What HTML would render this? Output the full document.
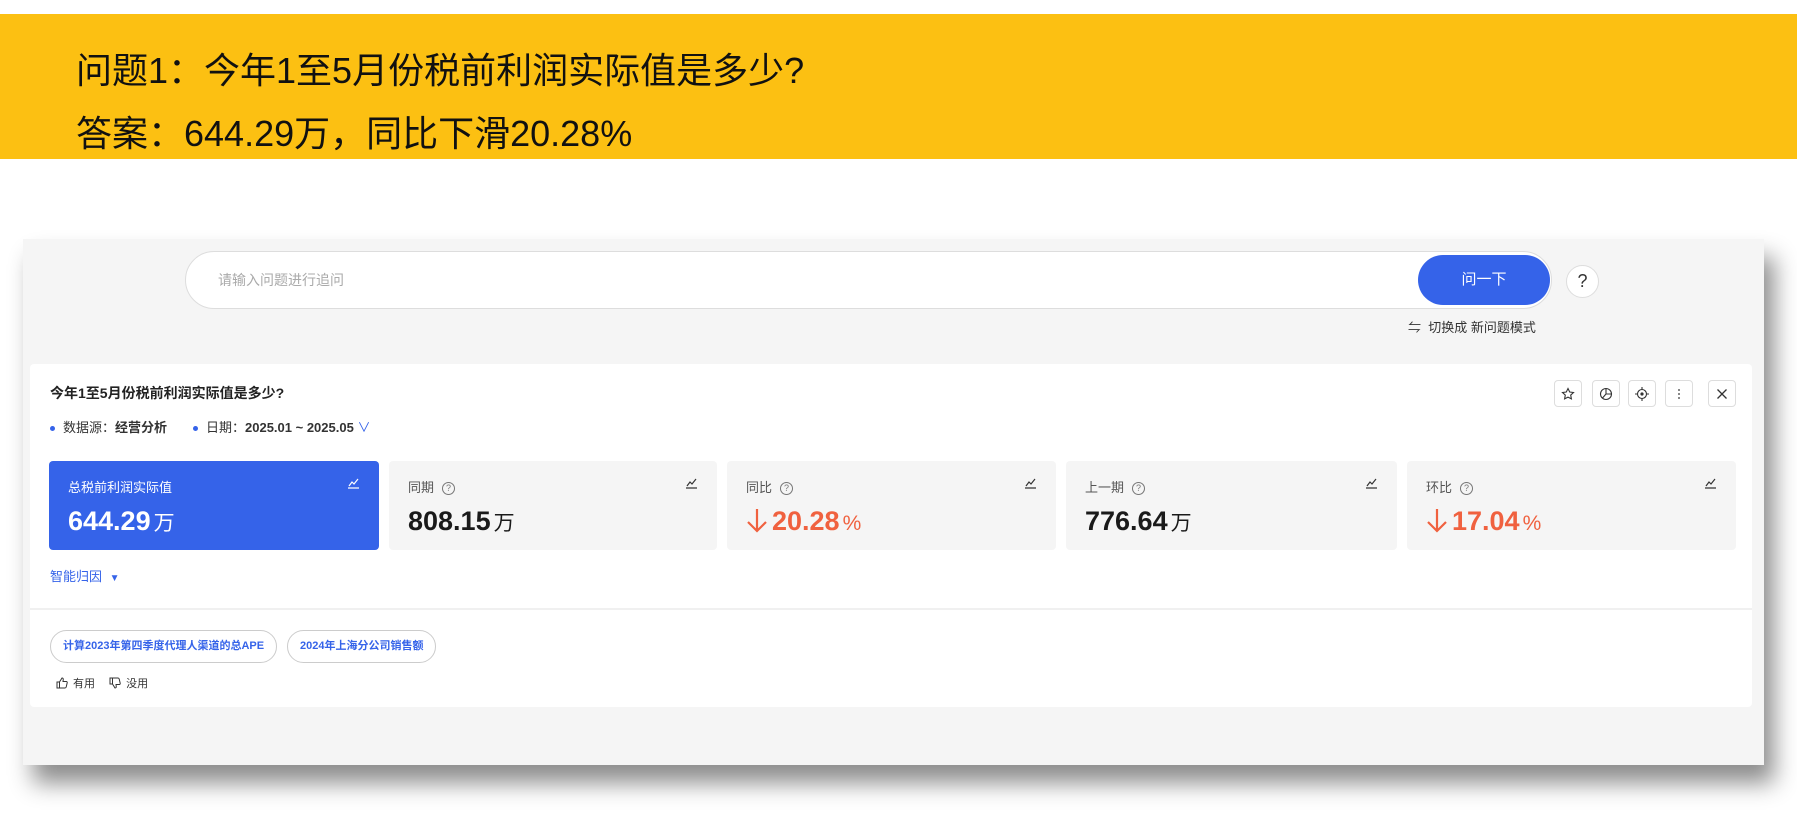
<!DOCTYPE html>
<html><head><meta charset="utf-8"><style>
*{margin:0;padding:0;box-sizing:border-box}
body{width:1797px;height:815px;background:#fff;font-family:"Liberation Sans","Noto Sans CJK SC",sans-serif;position:relative;overflow:hidden;color:#222}
.abs{position:absolute}
.banner{left:0;top:14px;width:1797px;height:145px;background:#fcc012}
.banner div{position:absolute;left:76px;font-size:36px;color:#111;white-space:nowrap;line-height:40px}
.panel{left:23px;top:239px;width:1741px;height:526px;background:#f5f5f5;box-shadow:10px 18px 22px rgba(0,0,0,.45)}
.input{left:185px;top:251px;width:1367px;height:58px;border:1px solid #ddd;border-radius:29px;background:#fff}
.input span{position:absolute;left:32px;top:18px;font-size:14px;color:#aaa}
.btn{left:1418px;top:255px;width:132px;height:50px;border-radius:25px;background:#3563e9;color:#fff;font-size:15px;text-align:center;line-height:50px}
.q{left:1566px;top:265px;width:33px;height:33px;border-radius:50%;border:1px solid #ddd;background:#fff;text-align:center;line-height:31px;font-size:18px;color:#333}
.sw{left:1408px;top:317px;font-size:13px;color:#333}
.card{left:30px;top:364px;width:1722px;height:343px;background:#fff;border-radius:4px}
.title{left:50px;top:383px;font-size:14px;font-weight:bold;color:#222}
.meta{top:417px;font-size:13px;color:#333}
.dot{display:inline-block;width:5px;height:5px;border-radius:50%;background:#3563e9;margin-right:8px;vertical-align:middle}
.ib{top:380px;width:28px;height:27px;border:1px solid #ddd;border-radius:4px;background:#fff;display:flex;align-items:center;justify-content:center}
.box{top:461px;height:89px;border-radius:4px;background:#f5f5f5}
.box .l{position:absolute;left:19px;top:16px;font-size:13px;color:#555}
.box .v{position:absolute;left:19px;top:45px;font-size:27px;font-weight:bold;color:#1a1a1a;white-space:nowrap}
.box .v small{font-size:21px;font-weight:normal;margin-left:3px}
.box .t{position:absolute;right:19px;top:17px}
.qi{display:inline-block;width:13px;height:13px;border:1px solid #777;border-radius:50%;font-size:9px;line-height:11px;text-align:center;margin-left:8px;vertical-align:1px;color:#777}
.red{color:#f0613f!important}
.arr{vertical-align:-3px;margin-right:4px}
.div{left:30px;top:608px;width:1722px;height:2px;background:#f0f0f0}
.chip{top:630px;height:33px;border:1px solid #ccc;border-radius:17px;font-size:11px;color:#3563e9;font-weight:bold;line-height:31px;padding:0 12px;white-space:nowrap}
.fb{top:675px;font-size:11px;color:#333;display:flex;align-items:center;gap:5px}
</style></head><body>
<div class="abs banner"><div style="top:37px">问题1：今年1至5月份税前利润实际值是多少?</div><div style="top:100px">答案：644.29万，同比下滑20.28%</div></div>
<div class="abs panel"></div>
<div class="abs input"><span>请输入问题进行追问</span></div>
<div class="abs btn">问一下</div>
<div class="abs q">?</div>
<div class="abs sw">⇋&nbsp; 切换成 新问题模式</div>
<div class="abs card"></div>
<div class="abs title">今年1至5月份税前利润实际值是多少?</div>
<div class="abs meta" style="left:50px"><span class="dot"></span>数据源：<b>经营分析</b></div>
<div class="abs meta" style="left:193px"><span class="dot"></span>日期：<b>2025.01 ~ 2025.05</b> <span style="color:#3563e9">&#8744;</span></div>
<div class="abs ib" style="left:1554px"><svg width="14" height="14" viewBox="0 0 14 14"><path d="M7 1.5l1.7 3.5 3.8.5-2.8 2.6.7 3.8L7 10.1 3.6 11.9l.7-3.8L1.5 5.5l3.8-.5z" fill="none" stroke="#333" stroke-width="1.1"/></svg></div>
<div class="abs ib" style="left:1592px"><svg width="14" height="14" viewBox="0 0 14 14"><circle cx="7" cy="7" r="5.5" fill="none" stroke="#333" stroke-width="1.1"/><path d="M7 1.5V7h5.5M7 7l-3.5 4" fill="none" stroke="#333" stroke-width="1.1"/></svg></div>
<div class="abs ib" style="left:1628px"><svg width="14" height="14" viewBox="0 0 14 14"><circle cx="7" cy="7" r="4.5" fill="none" stroke="#333" stroke-width="1.1"/><circle cx="7" cy="7" r="1.6" fill="#333"/><path d="M7 0v2.5M7 11.5V14M0 7h2.5M11.5 7H14" stroke="#333" stroke-width="1.1"/></svg></div>
<div class="abs ib" style="left:1665px"><svg width="14" height="14"><circle cx="7" cy="3" r=".9" fill="#333"/><circle cx="7" cy="7" r=".9" fill="#333"/><circle cx="7" cy="11" r=".9" fill="#333"/></svg></div>
<div class="abs ib" style="left:1708px"><svg width="14" height="14"><path d="M2.5 2.5l9 9M11.5 2.5l-9 9" stroke="#333" stroke-width="1.3"/></svg></div>

<div class="abs box" style="left:49px;width:330px;background:#3563e9">
<div class="l" style="color:#fff">总税前利润实际值</div><svg class="t" width="13" height="11"><path d="M1 10h11M2 8l3-4 2 2 4-5" fill="none" stroke="#fff" stroke-width="1.2"/></svg>
<div class="v" style="color:#fff">644.29<small>万</small></div></div>
<div class="abs box" style="left:389px;width:328px">
<div class="l">同期<span class="qi">?</span></div><svg class="t" width="13" height="11"><path d="M1 10h11M2 8l3-4 2 2 4-5" fill="none" stroke="#333" stroke-width="1.2"/></svg>
<div class="v">808.15<small>万</small></div></div>
<div class="abs box" style="left:727px;width:329px">
<div class="l">同比<span class="qi">?</span></div><svg class="t" width="13" height="11"><path d="M1 10h11M2 8l3-4 2 2 4-5" fill="none" stroke="#333" stroke-width="1.2"/></svg>
<div class="v red"><svg class="arr" width="22" height="26" viewBox="0 0 22 26"><path d="M11 2v22M2 15l9 9 9-9" fill="none" stroke="#f0613f" stroke-width="2.2"/></svg>20.28<small>%</small></div></div>
<div class="abs box" style="left:1066px;width:331px">
<div class="l">上一期<span class="qi">?</span></div><svg class="t" width="13" height="11"><path d="M1 10h11M2 8l3-4 2 2 4-5" fill="none" stroke="#333" stroke-width="1.2"/></svg>
<div class="v">776.64<small>万</small></div></div>
<div class="abs box" style="left:1407px;width:329px">
<div class="l">环比<span class="qi">?</span></div><svg class="t" width="13" height="11"><path d="M1 10h11M2 8l3-4 2 2 4-5" fill="none" stroke="#333" stroke-width="1.2"/></svg>
<div class="v red"><svg class="arr" width="22" height="26" viewBox="0 0 22 26"><path d="M11 2v22M2 15l9 9 9-9" fill="none" stroke="#f0613f" stroke-width="2.2"/></svg>17.04<small>%</small></div></div>

<div class="abs" style="left:50px;top:566px;font-size:13px;color:#3563e9">智能归因 <span style="font-size:10px;margin-left:4px">▼</span></div>
<div class="abs div"></div>
<div class="abs chip" style="left:50px">计算2023年第四季度代理人渠道的总APE</div>
<div class="abs chip" style="left:287px">2024年上海分公司销售额</div>
<div class="abs fb" style="left:56px"><svg width="12" height="12" viewBox="0 0 12 12"><path d="M1 5h2.5v6H1zM3.5 5l2.5-4c1 0 1.5.7 1.2 2L7 4.5h3.2c.8 0 1.2.6 1 1.3L10.2 10c-.2.6-.6 1-1.2 1H3.5" fill="none" stroke="#333" stroke-width="1"/></svg>有用&nbsp;&nbsp;&nbsp;<svg width="12" height="12" viewBox="0 0 12 12"><path d="M1 1h2.5v6H1zM3.5 7l2.5 4c1 0 1.5-.7 1.2-2L7 7.5h3.2c.8 0 1.2-.6 1-1.3L10.2 2C10 1.4 9.6 1 9 1H3.5" fill="none" stroke="#333" stroke-width="1"/></svg>没用</div>
</body></html>
